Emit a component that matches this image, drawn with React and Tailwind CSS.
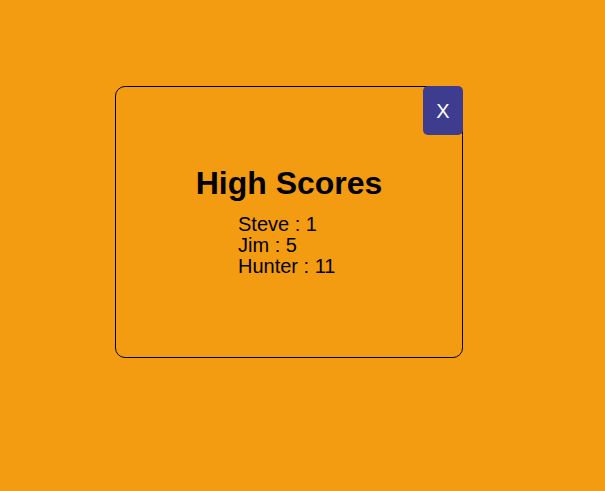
const scores = [
  { name: 'Steve', score: 1 },
  { name: 'Jim', score: 5 },
  { name: 'Hunter', score: 11 },
];

const App = () => {
  return (
    <div
      className="min-h-screen w-full bg-[#f39c12] pt-[86px] pl-[115px] text-black"
      style={{ fontFamily: '"Liberation Sans", Arial, sans-serif' }}
    >
      <div className="relative w-[348px] h-[272px] border border-black rounded-[10px] pt-[78px]">
        <button className="absolute top-[-1px] right-[-1px] w-10 h-[49px] rounded-[5px] bg-[#3d3c8f] text-white text-[20px] leading-none flex items-center justify-center">
          X
        </button>
        <h1 className="text-[32px] font-bold text-center leading-[37px]">High Scores</h1>
        <ul className="mt-[12px] pl-[122px] text-[20px] leading-[21px]">
          {scores.map((s) => (
            <li key={s.name}>
              {s.name} : {s.score}
            </li>
          ))}
        </ul>
      </div>
    </div>
  );
};

export default App;
